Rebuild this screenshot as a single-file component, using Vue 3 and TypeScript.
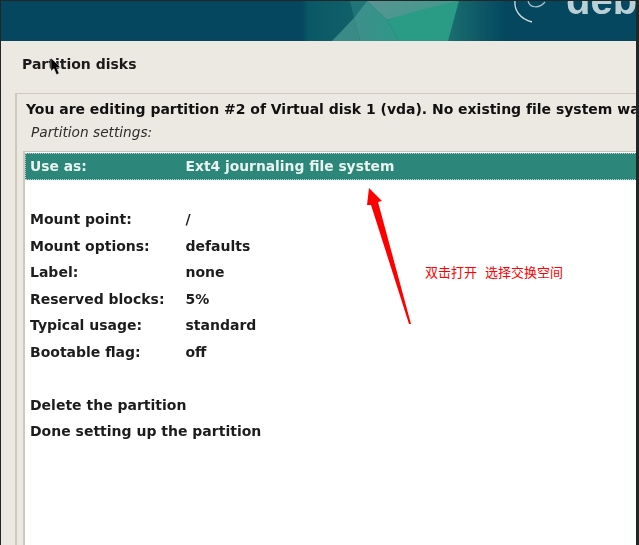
<script setup lang="ts">
const rows: [string, string][] = [
  ['Mount point:', '/'],
  ['Mount options:', 'defaults'],
  ['Label:', 'none'],
  ['Reserved blocks:', '5%'],
  ['Typical usage:', 'standard'],
  ['Bootable flag:', 'off'],
]
</script>

<template>
  <div class="screen">
    <div class="desktop">
      <header class="banner">
        <svg class="art" width="636" height="41" viewBox="0 0 636 41" aria-hidden="true">
          <defs>
            <linearGradient id="base" x1="0" x2="1" y1="0" y2="0">
              <stop offset="0" stop-color="#04475f" />
              <stop offset="0.475" stop-color="#04475f" />
              <stop offset="0.485" stop-color="#0a5866" />
              <stop offset="0.7" stop-color="#1c7070" />
              <stop offset="0.795" stop-color="#04475f" />
              <stop offset="1" stop-color="#04475f" />
            </linearGradient>
            <linearGradient id="grey" x1="0" x2="1" y1="0" y2="0.4">
              <stop offset="0" stop-color="#5a9494" />
              <stop offset="1" stop-color="#3f9a8c" />
            </linearGradient>
            <linearGradient id="mid" x1="0" x2="1" y1="0" y2="0">
              <stop offset="0" stop-color="#3f8f8c" />
              <stop offset="1" stop-color="#2e9888" />
            </linearGradient>
          </defs>
          <rect width="636" height="41" fill="url(#base)" />
          <polygon points="332,41 354,18 360,41" fill="#3a8a88" />
          <polygon points="354,18 367,1 350,1" fill="#1f7478" />
          <polygon points="367,1 459,1 387,20" fill="url(#grey)" />
          <polygon points="354,18 367,1 387,20 399,41 360,41" fill="url(#mid)" />
          <polygon points="387,20 420,10 459,1 448,41 399,41" fill="#2a9b85" />
          <path d="M515 1 C514 10 520 19 532 22" fill="none" stroke="#cfdde0" stroke-width="1.3" />
          <path d="M528 1 C530 8 539 9 545 2" fill="none" stroke="#a9c3c9" stroke-width="1.2" />
        </svg>
        <span class="logo">deb</span>
      </header>
      <main class="panel">
        <h1 class="title">Partition disks</h1>
        <section class="frame">
          <p class="intro">You are editing partition #2 of Virtual disk 1 (vda). No existing file system was detected in this partition.</p>
          <p class="subtitle">Partition settings:</p>
          <div class="list">
            <div class="row selected"><span class="key">Use as:</span><span>Ext4 journaling file system</span></div>
            <div class="spacer"></div>
            <div v-for="r in rows" :key="r[0]" class="row"><span class="key">{{ r[0] }}</span><span>{{ r[1] }}</span></div>
            <div class="spacer"></div>
            <div class="row">Delete the partition</div>
            <div class="row">Done setting up the partition</div>
          </div>
        </section>
      </main>
    </div>
    <svg class="arrow" width="60" height="145" viewBox="0 0 60 145" aria-hidden="true">
      <polygon points="9,1 22,14 18,15 51,137 49,137 11,18 7,18" fill="#ff0000" />
    </svg>
    <div class="note"><span>双击打开</span><span>选择交换空间</span></div>
    <svg class="cursor" width="12" height="18" viewBox="0 0 12 18" aria-hidden="true">
      <polygon points="1,0 1,13 4,10.5 6.5,16.5 9,15.5 6.5,9.5 10.5,9.5" fill="#000" stroke="#eee" stroke-width="0.4" />
    </svg>
  </div>
</template>

<style>
html, body { margin: 0; padding: 0; background: #fff; overflow: hidden; }
</style>

<style scoped>
.screen {
  position: relative;
  width: 639px;
  height: 545px;
  overflow: hidden;
  background: #232627;
  font-family: "DejaVu Sans", sans-serif;
}
.desktop {
  margin-left: 1px;
  padding-top: 1px;
  width: 635px;
  height: 544px;
  display: flex;
  flex-direction: column;
  filter: blur(0.35px);
}
.banner {
  position: relative;
  height: 40px;
  flex: none;
  overflow: hidden;
  background: #04475f;
}
.art { position: absolute; left: -1px; top: -1px; }
.logo {
  position: absolute;
  left: 565px;
  top: -31px;
  font: bold 40px/60px "Liberation Sans", sans-serif;
  color: #b9d0d6;
}
.panel {
  flex: 1;
  min-height: 0;
  background: #ece9e2;
  padding-left: 14px;
  overflow: hidden;
}
.title {
  margin: 0;
  padding: 14px 0 0 7px;
  height: 39px;
  box-sizing: content-box;
  font-size: 14px;
  line-height: 18px;
  font-weight: 700;
  color: #1a1a1a;
}
.frame {
  border-top: 1px solid #cfc8bd;
  border-left: 2px solid #cfc8bd;
  padding: 0 0 0 9px;
  margin-top: -1px;
  height: 460px;
  width: 630px;
  box-sizing: border-box;
}
.intro {
  margin: 0;
  padding-top: 6px;
  height: 18px;
  box-sizing: content-box;
  font-size: 14px;
  letter-spacing: -0.02px;
  line-height: 18px;
  font-weight: 700;
  color: #111;
  white-space: nowrap;
}
.subtitle {
  margin: 0;
  padding: 5px 0 0 5px;
  font-size: 13.7px;
  line-height: 18px;
  font-style: italic;
  color: #2e2e2e;
}
.list {
  margin-top: 10px;
  border-top: 1px solid #c9c4bb;
  border-left: 2px solid #cfc8bd;
  background: #fff;
  height: 400px;
  padding-top: 1px;
  margin-left: -3px;
}
.row {
  display: flex;
  height: 26.5px;
  align-items: center;
  padding-left: 5px;
  font-size: 14px;
  font-weight: 700;
  color: #1c1c1c;
  white-space: nowrap;
}
.selected {
  font-size: 13.85px;
  background: #2c877a;
  color: #e9f3f0;
  outline: 1px dotted #b8d5cf;
  outline-offset: -1px;
}
.key { width: 155.5px; flex: none; }
.spacer { height: 26.5px; }
.arrow { position: absolute; left: 360px; top: 187px; }
.note {
  position: absolute;
  left: 425px;
  top: 263px;
  display: flex;
  gap: 8px;
  font: 13px/18px "Noto Sans CJK SC", sans-serif;
  color: #ff0000;
  white-space: nowrap;
}
.cursor { position: absolute; left: 50px; top: 58px; }
</style>
